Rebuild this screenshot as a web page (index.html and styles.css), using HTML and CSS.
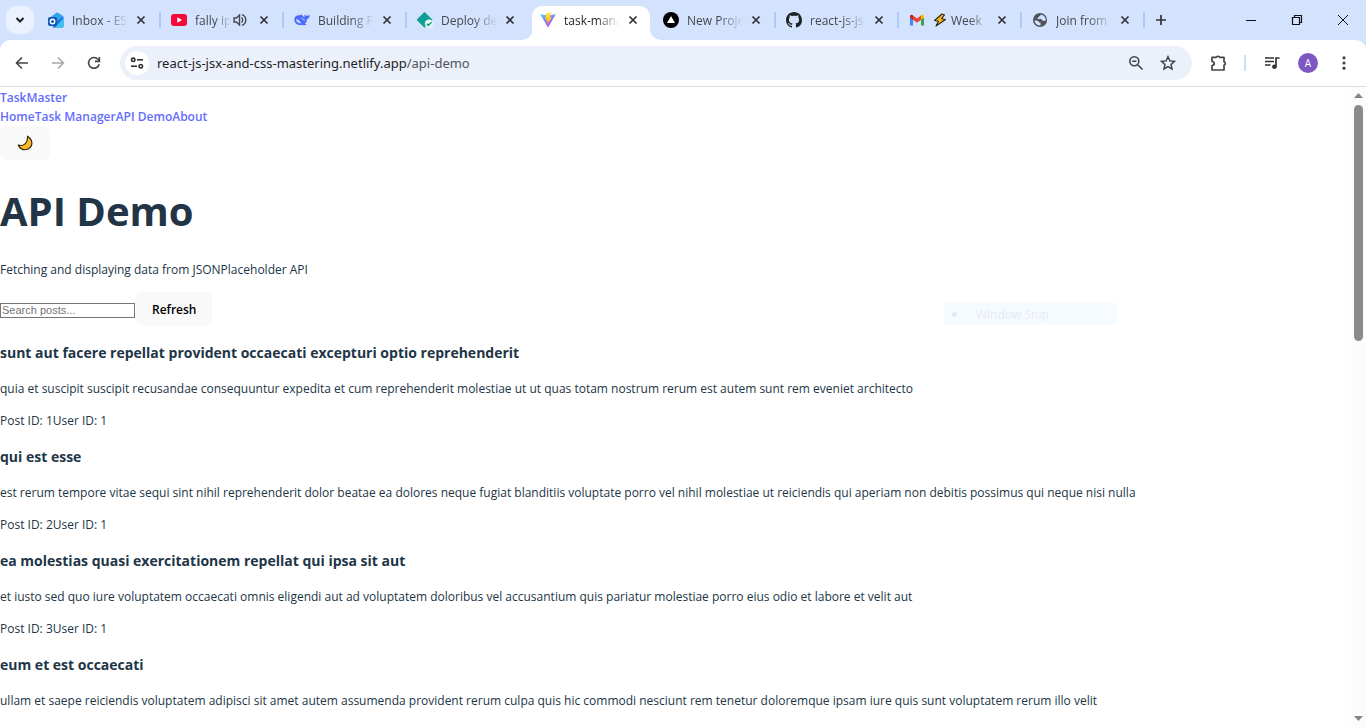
FILE: index.html
```html
<!DOCTYPE html>
<html lang="en">
<head>
<meta charset="utf-8">
<title>task-manager</title>
<link rel="stylesheet" href="styles.css">
</head>
<body>
<svg class="defs" aria-hidden="true">
  <symbol id="close" viewBox="0 0 10 10"><path d="M1.500 1.500l7 7M8.500 1.500l-7 7" fill="none" stroke="currentColor" stroke-width="1.700"/></symbol>
</svg>

<header class="tabstrip">
  <button class="tab-search" aria-label="Search tabs"><svg width="10" height="8" viewBox="0 0 10 8"><path d="M1.500 2L5 5.500 8.500 2" fill="none" stroke="#1f1f1f" stroke-width="2"/></svg></button>
  <div class="tabs">
    <div class="tab">
      <svg class="favicon" viewBox="0 0 16 16"><path d="M3 5l6-4.500L15.500 5v9a1.500 1.500 0 0 1-1.500 1.500H5z" fill="#1f6fdc"/><path d="M4 4.500L9.500.5l6 4L9 9z" fill="#2fa4ee"/><path d="M15.500 6v8a1.500 1.500 0 0 1-1.500 1.500H7z" fill="#35c4f5"/><rect y="5" width="9" height="9" rx="2" fill="#0f57b5"/><circle cx="4.500" cy="9.500" r="2.200" fill="none" stroke="#fff" stroke-width="1.400"/></svg>
      <span class="title">Inbox - ES</span>
      <button class="close" aria-label="Close tab"><svg><use href="#close"/></svg></button>
    </div>
    <div class="tab">
      <svg class="favicon" viewBox="0 0 16 16"><rect y="2" width="16" height="12" rx="3" fill="#f5083a"/><path d="M6.300 5.200L11 8l-4.700 2.800z" fill="#fff"/></svg>
      <span class="title short">fally ip</span>
      <svg class="audio" viewBox="0 0 14 14"><path d="M1 5h2.300L6.500 2v10L3.300 9H1z" fill="none" stroke="#45484d" stroke-width="1.400"/><path d="M8.500 4.500a3.200 3.200 0 0 1 0 5M9 1.700a5.600 5.600 0 0 1 0 10.600" fill="none" stroke="#45484d" stroke-width="1.400"/></svg>
      <button class="close" aria-label="Close tab"><svg><use href="#close"/></svg></button>
    </div>
    <div class="tab">
      <svg class="favicon" viewBox="0 0 16 16"><path d="M.3 7C.5 4 3 2.800 5.800 3.200c.8-.2 1.200-.8 2-.6.300.9 1.200 2 2.600 2.700.3-1.300-.2-2 .5-2.700.6.800 1.300 1.200 2 1.200.9 0 1.700-.6 2.900-.6-.1 2-1 3.300-2.700 3.800-.1 2-1 3.700-2.200 4.600.6.300 1.300.6 1.300 1.200-1.500.6-2.700.4-4 .1C4 13.600.1 11.500.3 7z" fill="#4d6bfe"/><path d="M2 7.300c2.200-.2 3.800 2 5.200 3.900-2.300.3-5-1.200-5.200-3.900z" fill="#d3e3fd"/><path d="M7.500 6.700c1.200-.5 2.500.3 2.600 1.800" fill="none" stroke="#d3e3fd"/></svg>
      <span class="title">Building F</span>
      <button class="close" aria-label="Close tab"><svg><use href="#close"/></svg></button>
    </div>
    <div class="tab before-active">
      <svg class="favicon" viewBox="0 0 16 16"><path d="M7.500.3L15 7.800l-7.500 7.400L0 7.800z" fill="#0f9f94" stroke="#0f9f94" stroke-linejoin="round"/><circle cx="12" cy="11.800" r="4.200" fill="#e7f5f3"/><path d="M9.800 11.700l1.600 1.700 3-3.200" fill="none" stroke="#0aa36d" stroke-width="1.500"/></svg>
      <span class="title">Deploy de</span>
      <button class="close" aria-label="Close tab"><svg><use href="#close"/></svg></button>
    </div>
    <div class="tab active">
      <svg class="favicon" viewBox="0 0 16 16"><defs><linearGradient id="vite" x1="0" y1="0" x2=".6" y2="1"><stop offset="0" stop-color="#41d1ff"/><stop offset="1" stop-color="#bd34fe"/></linearGradient><linearGradient id="bolt" x1="0" y1="0" x2="0" y2="1"><stop offset="0" stop-color="#ffea53"/><stop offset="1" stop-color="#ffa800"/></linearGradient></defs><path d="M.2 2.200L8 15.600 15.800 2.200 8.200 3.600z" fill="url(#vite)"/><path d="M11.300.3L5.700 1.400 5.300 7.500l1.700-.3-.5 2.400 1.300-.4-.9 4L12 5.300l-1.900.3z" fill="url(#bolt)"/></svg>
      <span class="title">task-mana</span>
      <button class="close" aria-label="Close tab"><svg><use href="#close"/></svg></button>
    </div>
    <div class="tab">
      <svg class="favicon" viewBox="0 0 16 16"><circle cx="8" cy="8" r="8" fill="#000"/><path d="M8 4l4 7H4z" fill="#fff"/></svg>
      <span class="title">New Proje</span>
      <button class="close" aria-label="Close tab"><svg><use href="#close"/></svg></button>
    </div>
    <div class="tab">
      <svg class="favicon" viewBox="0 0 16 16"><path d="M8 0C3.580 0 0 3.580 0 8c0 3.540 2.290 6.530 5.470 7.590.4.070.55-.17.55-.38 0-.19-.01-.82-.01-1.490-2.010.37-2.530-.49-2.690-.94-.09-.23-.48-.94-.82-1.130-.28-.15-.68-.52-.01-.53.63-.01 1.080.58 1.230.82.72 1.210 1.870.87 2.330.66.070-.52.280-.87.510-1.070-1.780-.2-3.640-.89-3.640-3.950 0-.87.310-1.590.82-2.150-.08-.2-.36-1.020.08-2.120 0 0 .67-.21 2.200.82.64-.18 1.320-.27 2-.27s1.360.09 2 .27c1.530-1.040 2.200-.82 2.200-.82.44 1.100.16 1.920.08 2.120.51.560.82 1.270.82 2.150 0 3.070-1.870 3.750-3.650 3.950.29.25.54.73.54 1.480 0 1.070-.01 1.930-.01 2.200 0 .21.15.46.55.38A8.010 8.010 0 0 0 16 8c0-4.420-3.580-8-8-8z" fill="#1f2328"/></svg>
      <span class="title">react-js-js</span>
      <button class="close" aria-label="Close tab"><svg><use href="#close"/></svg></button>
    </div>
    <div class="tab">
      <svg class="favicon" viewBox="0 0 16 16"><path d="M1 4v9.500h3V7z" fill="#4285f4"/><path d="M12 7v6.500h3V4z" fill="#34a853"/><path d="M4 3.500v4.300l4 3 4-3V3.500l-4 3z" fill="#ea4335"/><path d="M1 4.500C1 2.700 2.800 2.200 4 3.300v4.500L1 5.600z" fill="#c5221f"/><path d="M15 4.500c0-1.800-1.800-2.300-3-1.200v4.500l3-2.200z" fill="#fbbc04"/></svg>
      <svg class="zap" viewBox="0 0 14 14"><path d="M9 1L1.500 7.500l4 .8L3 13l9.500-6.500-4-.8L11.500 2z" fill="#fdb913" stroke="#2b2413" stroke-width="1.100" stroke-linejoin="round"/></svg>
      <span class="title emoji-title">Week</span>
      <button class="close" aria-label="Close tab"><svg><use href="#close"/></svg></button>
    </div>
    <div class="tab">
      <svg class="favicon" viewBox="0 0 16 16"><circle cx="8" cy="8" r="7" fill="#50545a"/><path d="M8.700 2.400c-.3 1-.2 1.600-1.300 1.900-.8.200-.4 1.300-1.200 1.500-.9.200-1.200.7-.4 1.200h3c1.200 0 1 1.700 2.100 1.800h2.700a5.600 5.600 0 0 0-4.900-6.400zM2.500 8.600c1.900-.1 4.600.2 4.600 2h1.400v2.900a5.600 5.600 0 0 1-6-4.900z" fill="#d3e3fd"/></svg>
      <span class="title">Join from</span>
      <button class="close" aria-label="Close tab"><svg><use href="#close"/></svg></button>
    </div>
  </div>
  <button class="new-tab" aria-label="New tab"><svg width="12" height="12" viewBox="0 0 12 12"><path d="M6 1v10M1 6h10" stroke="#303236" stroke-width="1.700"/></svg></button>
  <div class="window-controls">
    <button aria-label="Minimize"><svg width="12" height="12" viewBox="0 0 12 12"><path d="M1 6.500h10" stroke="#111"/></svg></button>
    <button aria-label="Restore"><svg width="12" height="12" viewBox="0 0 12 12"><path d="M1.500 3.500h7v7h-7zM3.500 3V1.500h7v7H9" fill="none" stroke="#111" stroke-width="1.200"/></svg></button>
    <button aria-label="Close"><svg width="12" height="12" viewBox="0 0 12 12"><path d="M1 1l10 10M11 1L1 11" stroke="#111"/></svg></button>
  </div>
</header>

<div class="toolbar-bg">
<div class="toolbar">
  <div class="nav-buttons">
    <button aria-label="Back"><svg width="14" height="14" viewBox="0 0 14 14"><path d="M13 7H2M7 1.500L1.500 7 7 12.500" fill="none" stroke="#414549" stroke-width="1.600"/></svg></button>
    <button aria-label="Forward" disabled><svg width="14" height="14" viewBox="0 0 14 14"><path d="M1 7h11M7 1.500L12.500 7 7 12.500" fill="none" stroke="#a6a8ab" stroke-width="1.500"/></svg></button>
    <button aria-label="Reload"><svg width="14" height="14" viewBox="0 0 14 14"><path d="M12.200 8.200A5.400 5.400 0 1 1 11 3.300l1 1.200" fill="none" stroke="#414549" stroke-width="1.600"/><path d="M12.400 1v4.400H8" fill="none" stroke="#414549" stroke-width="1.600"/></svg></button>
  </div>
  <div class="omnibox">
    <button class="site-info" aria-label="View site information"><svg width="14" height="14" viewBox="0 0 14 14"><g fill="none" stroke="#303236" stroke-width="1.600"><circle cx="3.200" cy="3.800" r="1.700"/><path d="M7 3.800h6"/><circle cx="10.800" cy="10.200" r="1.700"/><path d="M1 10.200h6"/></g></svg></button>
    <div class="url">react-js-jsx-and-css-mastering.netlify.app<span>/api-demo</span></div>
    <button class="zoom" aria-label="Zoom"><svg width="16" height="16" viewBox="0 0 16 16"><g fill="none" stroke="#414549" stroke-width="1.600"><circle cx="6.300" cy="6.300" r="4.500"/><path d="M9.700 9.700l4.800 4.800M4.200 6.300h4.200"/></g></svg></button>
    <button class="star" aria-label="Bookmark this tab"><svg width="16" height="16" viewBox="0 0 16 16"><path d="M8 1.700l1.900 4.200 4.600.5-3.400 3.100.9 4.500-4-2.300L4 14l.9-4.500-3.400-3.100 4.600-.5z" fill="none" stroke="#414549" stroke-width="1.500"/></svg></button>
  </div>
  <button class="extensions" aria-label="Extensions"><svg width="18" height="18" viewBox="0 0 18 18"><path d="M2 3.300h4.200c.1-1.300 3.300-1.300 3.400 0H14v4.500c1.800.1 1.800 3.100 0 3.200v5H2v-4.500c3-.2 3-3.800 0-4z" fill="none" stroke="#414549" stroke-width="1.700" stroke-linejoin="round"/></svg></button>
  <i class="divider"></i>
  <button class="media" aria-label="Media controls"><svg width="16" height="14" viewBox="0 0 16 14"><path d="M1 2h9M1 5.500h9M1 9h5.500M12 11V2h3.500" fill="none" stroke="#303236" stroke-width="1.700"/><circle cx="10.400" cy="10.800" r="2.300" fill="#303236"/></svg></button>
  <button class="avatar" aria-label="Profile">A</button>
  <button class="menu" aria-label="Menu"><svg width="4" height="14" viewBox="0 0 4 14"><g fill="#414549"><circle cx="2" cy="1.800" r="1.600"/><circle cx="2" cy="7" r="1.600"/><circle cx="2" cy="12.200" r="1.600"/></g></svg></button>
</div>
</div>

<div class="viewport">
  <main class="page">
    <nav>
      <div class="row"><a href="#">TaskMaster</a></div>
      <div class="row"><a href="#">Home</a><a href="#">Task Manager</a><a href="#">API Demo</a><a href="#">About</a></div>
      <button class="btn theme" aria-label="Toggle dark mode"><svg width="16" height="16" viewBox="0 0 16 16"><path d="M10.500 1.200C16 4.500 16.300 11 11.500 13.700 7.500 16 2.500 14.300 1.300 10c5 1.800 10-2 9.200-8.800z" fill="#fcb827" stroke="#2f2614" stroke-width="1.200" stroke-linejoin="round"/></svg></button>
    </nav>
    <h1>API Demo</h1>
    <p>Fetching and displaying data from JSONPlaceholder API</p>
    <div class="controls"><input type="text" placeholder="Search posts..." aria-label="Search posts"><button class="btn">Refresh</button></div>
    <article>
      <h3>sunt aut facere repellat provident occaecati excepturi optio reprehenderit</h3>
      <p>quia et suscipit suscipit recusandae consequuntur expedita et cum reprehenderit molestiae ut ut quas totam nostrum rerum est autem sunt rem eveniet architecto</p>
      <div class="meta"><span>Post ID: 1</span><span>User ID: 1</span></div>
    </article>
    <article>
      <h3>qui est esse</h3>
      <p>est rerum tempore vitae sequi sint nihil reprehenderit dolor beatae ea dolores neque fugiat blanditiis voluptate porro vel nihil molestiae ut reiciendis qui aperiam non debitis possimus qui neque nisi nulla</p>
      <div class="meta"><span>Post ID: 2</span><span>User ID: 1</span></div>
    </article>
    <article>
      <h3>ea molestias quasi exercitationem repellat qui ipsa sit aut</h3>
      <p>et iusto sed quo iure voluptatem occaecati omnis eligendi aut ad voluptatem doloribus vel accusantium quis pariatur molestiae porro eius odio et labore et velit aut</p>
      <div class="meta"><span>Post ID: 3</span><span>User ID: 1</span></div>
    </article>
    <article>
      <h3>eum et est occaecati</h3>
      <p>ullam et saepe reiciendis voluptatem adipisci sit amet autem assumenda provident rerum culpa quis hic commodi nesciunt rem tenetur doloremque ipsam iure quis sunt voluptatem rerum illo velit</p>
      <div class="meta"><span>Post ID: 4</span><span>User ID: 1</span></div>
    </article>
  </main>
  <div class="scrollbar">
    <svg width="9" height="5" viewBox="0 0 9 5"><path d="M4.500 0L9 5H0z" fill="#858585"/></svg>
    <div class="track"><div class="thumb"></div></div>
    <svg width="9" height="5" viewBox="0 0 9 5"><path d="M0 0h9L4.500 5z" fill="#858585"/></svg>
  </div>
  <div class="snip"><i></i><span>Window Snip</span></div>
</div>
</body>
</html>
```

FILE: styles.css
```css
* { box-sizing: border-box; }
body {
  margin: 0;
  height: 100vh;
  display: flex;
  flex-direction: column;
  overflow: hidden;
  background: #fff;
  color: #213547;
  font: 12px/19px "Open Sans", "Noto Sans", sans-serif;
}
button {
  padding: 0;
  border: 0;
  background: none;
  font-family: inherit;
  display: flex;
  align-items: center;
  justify-content: center;
  flex: none;
}
svg { display: block; flex: none; }
.defs { position: absolute; width: 0; height: 0; }

/* Tab strip */
.tabstrip {
  display: flex;
  align-items: center;
  flex: none;
  height: 40px;
  padding-left: 6px;
  background: #d3e2fd;
  color: #45484d;
}
.tab-search {
  width: 28px;
  height: 28px;
  border-radius: 10px;
  background: #ebf1fe;
}
.tabs { display: flex; flex: 0 1 1107px; min-width: 0; margin-left: 4px; }
.tab {
  position: relative;
  display: flex;
  align-items: center;
  flex: 1 1 0;
  min-width: 0;
  height: 34px;
  margin-top: 6px;
  padding: 0 15px 6px 10px;
}
.tab::after {
  content: "";
  position: absolute;
  right: 0;
  top: 6px;
  width: 2px;
  height: 16px;
  background: #b0c8f8;
}
.tab.before-active::after { display: none; }
.tab.active { color: #1f1f1f; }
.tab.active::before {
  content: "";
  position: absolute;
  inset: 0 3px 0 2px;
  border-radius: 10px 10px 0 0;
  background: #fff;
}
.tab.active::after {
  top: auto;
  right: -7px;
  bottom: 0;
  width: 137px;
  height: 10px;
  background:
    radial-gradient(circle at 0 0, transparent 9px, #fff 10px) left / 10px 10px no-repeat,
    radial-gradient(circle at 100% 0, transparent 9px, #fff 10px) right / 10px 10px no-repeat;
}
.tab.active > * { position: relative; }
.favicon { width: 16px; height: 16px; }
.title {
  flex: 1;
  min-width: 0;
  margin: 0 0 0 8px;
  white-space: nowrap;
  mask-image: linear-gradient(to right, #000 32px, transparent 56px);
}
.title.short { mask-image: linear-gradient(to right, #000 20px, transparent 36px); }
.zap { width: 14px; height: 14px; margin-left: 8px; }
.emoji-title { margin-left: 4px; mask-image: linear-gradient(to right, #000 18px, transparent 38px); }
.audio { width: 14px; height: 14px; margin-right: 12px; }
.close { width: 10px; height: 10px; color: #303236; }
.close svg { width: 10px; height: 10px; }
.new-tab { width: 28px; height: 28px; margin-left: 2px; }
.window-controls { display: flex; margin-left: auto; }
.window-controls button { width: 46px; height: 40px; }

/* Toolbar */
.toolbar-bg { flex: none; background: #d3e2fd; }
.toolbar {
  display: flex;
  align-items: center;
  height: 47px;
  padding: 0 14px 0 4px;
  border-bottom: 1px solid #dcdcde;
  border-radius: 10px 10px 0 0;
  background: #fff;
}
.nav-buttons { display: flex; }
.nav-buttons button { width: 36px; height: 34px; }
.omnibox {
  display: flex;
  align-items: center;
  flex: 1;
  height: 34px;
  margin-left: 8px;
  padding: 0 16px 0 5px;
  border-radius: 17px;
  background: #ebf0fa;
}
.site-info { width: 24px; height: 24px; border-radius: 50%; background: #fff; }
.url { flex: 1; margin-left: 8px; font-family: "Noto Sans", "Open Sans", sans-serif; font-size: 13px; color: #1f1f1f; }
.url span { color: #50545a; }
.star { margin-left: 16px; }
.extensions { margin-left: 18px; }
.divider { width: 2px; height: 16px; margin: 0 18px 0 16px; background: #cfe0f5; }
.avatar {
  width: 20px;
  height: 20px;
  margin: 0 18px;
  border-radius: 50%;
  background: #7e57c2;
  color: #fff;
  font-size: 10px;
}
.menu { width: 16px; }

/* Page */
.viewport { position: relative; display: flex; flex: 1; min-height: 0; overflow: hidden; }
.page { flex: 1; min-width: 0; overflow: hidden; padding-top: 1px; white-space: nowrap; }
.row { display: flex; }
a { color: #646cff; font-weight: 600; text-decoration: none; }
h1 { margin: 28px 0 26px; font-size: 40px; line-height: 46px; font-weight: 700; }
p { margin: 13px 0; }
h3 { margin: 15px 0; font-size: 14px; line-height: 23px; font-weight: 700; }
.btn {
  height: 34px;
  padding: 0 16px;
  border-radius: 6px;
  background: #f9f9f9;
  color: #000;
  font-size: 12px;
  font-weight: 600;
}
.theme { padding: 0 17px; }
.controls { display: flex; align-items: center; }
.controls input {
  width: 135px;
  height: 15px;
  margin: 2px 1px 0 0;
  padding: 0 1px;
  border: 1px solid #767676;
  border-radius: 0;
  font: 11px/13px "Liberation Sans", Arial, sans-serif;
}

/* Scrollbar */
.scrollbar {
  display: flex;
  flex-direction: column;
  align-items: center;
  width: 15px;
  padding: 6px 0 7px;
  background: #fcfcfc;
}
.track { flex: 1; padding: 7px 0; }
.thumb { width: 9px; height: 39%; border-radius: 5px; background: #8b8b8b; }

/* Fading menu entry */
.snip {
  position: absolute;
  top: 216px;
  left: 944px;
  display: flex;
  align-items: center;
  width: 173px;
  height: 22px;
  background: #f6fbff;
  color: #e6ebf0;
}
.snip i { width: 5px; height: 5px; margin: 0 19px 0 8px; border-radius: 50%; background: #e3eaf5; }
```
